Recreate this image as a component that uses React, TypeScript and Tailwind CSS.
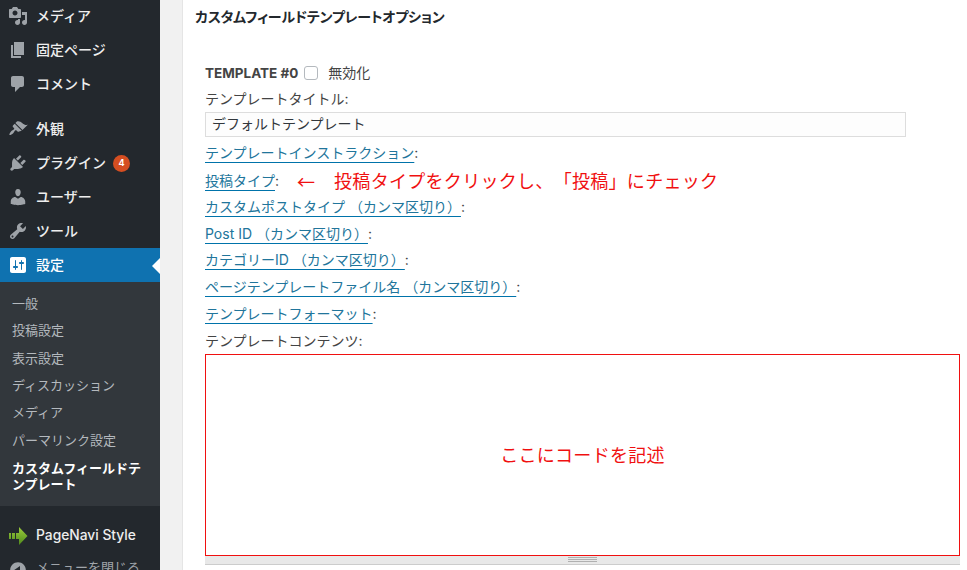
const F = "font-['Inter','Noto_Sans_CJK_JP',sans-serif] [text-spacing-trim:space-all]";

const paths: Record<string, string> = {
  media: "M13 11V4c0-.55-.45-1-1-1h-1.67L9 1H5L3.67 3H2c-.55 0-1 .45-1 1v7c0 .55.45 1 1 1h10c.55 0 1-.45 1-1zM7 4.5c1.38 0 2.5 1.12 2.5 2.5S8.38 9.5 7 9.5 4.5 8.38 4.5 7 5.62 4.5 7 4.5zM14 6h5v10.5c0 1.38-1.12 2.5-2.5 2.5S14 17.88 14 16.5s1.12-2.5 2.5-2.5c.17 0 .34.02.5.05V9h-3V6zm-4 8.05V13h2v3.5c0 1.38-1.12 2.5-2.5 2.5S7 17.88 7 16.5 8.12 14 9.5 14c.17 0 .34.02.5.05z",
  page: "M6 15V2h10v13H6zm-1 1h8v2H3V5h2v11z",
  comment: "M5 2h9c1.1 0 2 .9 2 2v7c0 1.1-.9 2-2 2h-2l-5 5v-5H5c-1.1 0-2-.9-2-2V4c0-1.1.9-2 2-2z",
  brush: "M14.48 11.06L7.41 3.99l1.5-1.5c.5-.56 2.3-.47 3.51.32 1.21.8 1.43 1.28 2.91 2.1 1.18.64 2.45 1.26 4.45.85zM13.77 11.77L6.7 4.7 4.93 6.47c-.39.39-.39 1.02 0 1.41l1.06 1.06c.39.39.39 1.03 0 1.42-.6.6-2.2 1.3-3 2.1-1 1-2 3-1.5 3.5s2.5-.5 3.5-1.5c.8-.8 1.5-2.4 2.1-3 .39-.39 1.03-.39 1.42 0l1.06 1.06c.39.39 1.02.39 1.41 0z",
  plug: "M13.11 4.36L9.87 7.6 8 5.73l3.24-3.24c.35-.34 1.05-.2 1.56.32.52.51.66 1.21.31 1.55zm-8 1.77l.91-1.12 9.01 9.01-1.19.84c-.71.71-2.63 1.16-3.82 1.16H6.14L4.9 17.26c-.59.59-1.54.59-2.12 0-.59-.58-.59-1.53 0-2.12l1.24-1.24v-3.88c0-1.13.4-3.19 1.09-3.89zm7.26 3.97l3.24-3.24c.34-.35 1.04-.21 1.55.31.52.51.66 1.21.31 1.55l-3.24 3.25z",
  user: "M10 9.25c-2.27 0-2.73-3.44-2.73-3.44C7 4.02 7.82 2 9.97 2c2.16 0 2.98 2.02 2.71 3.81 0 0-.41 3.44-2.68 3.44zm0 2.57L12.72 10c2.39 0 4.52 2.33 4.52 4.53v2.49s-3.65 1.13-7.24 1.13c-3.65 0-7.24-1.13-7.24-1.13v-2.49c0-2.25 1.94-4.48 4.47-4.48z",
  tool: "M16.68 9.77c-1.34 1.34-3.3 1.67-4.95.99l-5.41 6.52c-.99.99-2.59.99-3.58 0s-.99-2.59 0-3.57l6.52-5.42c-.68-1.65-.35-3.61.99-4.95 1.28-1.28 3.12-1.62 4.72-1.06l-2.89 2.89 2.82 2.82 2.86-2.87c.53 1.58.18 3.39-1.08 4.65zM3.81 16.21c.4.39 1.04.39 1.43 0 .4-.4.4-1.04 0-1.43-.39-.4-1.03-.4-1.43 0-.39.39-.39 1.03 0 1.43z",
  settings: "M18 16V4c0-1.1-.9-2-2-2H4c-1.1 0-2 .9-2 2v12c0 1.1.9 2 2 2h12c1.1 0 2-.9 2-2zM8 11h1c.55 0 1 .45 1 1s-.45 1-1 1H8v1.5c0 .28-.22.5-.5.5s-.5-.22-.5-.5V13H6c-.55 0-1-.45-1-1s.45-1 1-1h1V5.5c0-.28.22-.5.5-.5s.5.22.5.5V11zm5-2h-1c-.55 0-1-.45-1-1s.45-1 1-1h1V5.5c0-.28.22-.5.5-.5s.5.22.5.5V7h1c.55 0 1 .45 1 1s-.45 1-1 1h-1v5.5c0 .28-.22.5-.5.5s-.5-.22-.5-.5V9z",
  collapse: "M10 2.16c4.33 0 7.84 3.51 7.84 7.84s-3.51 7.84-7.84 7.84S2.16 14.33 2.16 10 5.71 2.16 10 2.16zm2 11.72V6.12L6.18 9.97z",
};

function Icon({ name, active }: { name: string; active?: boolean }) {
  return (
    <svg viewBox="0 0 20 20" className={`w-5 h-5 shrink-0 ml-2 mr-2 ${active ? "text-white" : "text-[#9ea3a8]"}`} fill="currentColor">
      <path d={paths[name]} />
    </svg>
  );
}

function Item({ icon, label, badge, active }: { icon: string; label: string; badge?: string; active?: boolean }) {
  return (
    <div className={`relative flex items-center h-[34px] text-[14px] font-medium ${active ? "bg-[#0f72b0] text-white" : "text-[#eeeeee]"}`}>
      <Icon name={icon} active={active} />
      <span className="pb-[2px]">{label}</span>
      {badge && (
        <span className="ml-[7px] w-[17px] h-[17px] rounded-full bg-[#d54e21] text-white text-[9px] font-bold flex items-center justify-center">{badge}</span>
      )}
      {active && <span className="absolute right-0 top-[10px] w-0 h-0 border-y-[8px] border-y-transparent border-r-[8px] border-r-white" />}
    </div>
  );
}

function Sub({ label }: { label: string }) {
  return <div className="h-[27.33px] flex items-center pl-3 text-[13px] text-[#b4b9be]">{label}</div>;
}

function Row({ children, flush }: { children: React.ReactNode; flush?: boolean }) {
  return <div className={`h-[26.85px] flex items-center text-[14px] text-[#444] ${flush ? "" : "pb-[3px]"}`}>{children}</div>;
}

function LinkRow({ label }: { label: string }) {
  return (
    <Row>
      <a className="text-[#21759b] underline decoration-[#0073aa] underline-offset-[4px]">{label}</a>
      <span>:</span>
    </Row>
  );
}

export default function App() {
  return (
    <div className={`${F} flex w-[967px] h-[570px] overflow-hidden bg-white`}>
      <aside className="w-[160px] shrink-0 bg-[#23282d] -mt-px">
        <Item icon="media" label="メディア" />
        <Item icon="page" label="固定ページ" />
        <Item icon="comment" label="コメント" />
        <div className="h-[11px]" />
        <Item icon="brush" label="外観" />
        <Item icon="plug" label="プラグイン" badge="4" />
        <Item icon="user" label="ユーザー" />
        <Item icon="tool" label="ツール" />
        <Item icon="settings" label="設定" active />
        <div className="bg-[#32373c] pt-[8px] h-[224px]">
          <Sub label="一般" />
          <Sub label="投稿設定" />
          <Sub label="表示設定" />
          <Sub label="ディスカッション" />
          <Sub label="メディア" />
          <Sub label="パーマリンク設定" />
          <div className="pl-3 pr-2 pt-[6px] text-[13px] leading-[16px] font-bold text-white">カスタムフィールドテンプレート</div>
        </div>
        <div className="h-[13px]" />
        <div className="flex items-center h-[34px] text-[13.8px] font-medium text-[#eeeeee]">
          <svg viewBox="0 0 20 20" className="w-5 h-5 shrink-0 ml-2 mr-2">
            <defs>
              <linearGradient id="pn" x1="0" y1="0" x2="0" y2="1">
                <stop offset="0" stopColor="#9ccc3c" />
                <stop offset="1" stopColor="#4f8a1c" />
              </linearGradient>
            </defs>
            <path d="M1 7h2v6H1zM4 7h3v6H4zM8 7h3V1l8.5 9-8.5 9v-6H8z" fill="url(#pn)" />
          </svg>
          <span className="pb-[2px]">PageNavi Style</span>
        </div>
        <div className="flex items-center h-[34px] text-[13px] text-[#a0a5aa]">
          <Icon name="collapse" />
          <span className="pb-[4px]">メニューを閉じる</span>
        </div>
      </aside>

      <div className="w-[23px] shrink-0 bg-[#f1f1f1] border-r border-[#e5e5e5]" />

      <main className="flex-1 min-w-0 bg-white pl-3">
        <h2 className="h-[34px] pb-[2px] flex items-center text-[14px] font-bold tracking-[-0.2px] text-[#23282d] [font-feature-settings:'palt']">カスタムフィールドテンプレートオプション</h2>
        <div className="pl-[10px] pr-[7px] pt-[26px]">
          <Row flush>
            <span className="font-bold text-[13.5px]">TEMPLATE #0</span>
            <span className="ml-[6px] w-[14px] h-[14px] rounded-[3px] border border-[#b4b9be] bg-white" />
            <span className="ml-[10px] pb-[2px] text-[14px]">無効化</span>
          </Row>
          <Row>テンプレートタイトル:</Row>
          <div className="w-[701px] h-[25px] border border-[#ddd] bg-[#fdfdfd] flex items-center pl-[6px] pb-[1px] text-[14px] text-[#32373c] -mt-[2px]">デフォルトテンプレート</div>
          <div className="h-[4px]" />
          <LinkRow label="テンプレートインストラクション" />
          <Row>
            <a className="mt-[2px] text-[#21759b] underline decoration-[#0073aa] underline-offset-[4px]">投稿タイプ</a>
            <span className="mt-[2px]">:</span>
            <span className="ml-[18px] mt-[4px] font-['Noto_Sans_CJK_JP',sans-serif] text-[18px] text-[#f01010]">←</span>
            <span className="ml-[19px] mt-[4px] text-[18px] tracking-[0.3px] text-[#f01010]">投稿タイプをクリックし、「投稿」にチェック</span>
          </Row>
          <LinkRow label="カスタムポストタイプ （カンマ区切り）" />
          <LinkRow label="Post ID （カンマ区切り）" />
          <LinkRow label="カテゴリーID （カンマ区切り）" />
          <LinkRow label="ページテンプレートファイル名 （カンマ区切り）" />
          <LinkRow label="テンプレートフォーマット" />
          <Row>テンプレートコンテンツ:</Row>
          <div className="h-[202px] -mt-[1px] border border-[#f01010] flex items-center justify-center text-[18px] tracking-[0.3px] text-[#f01010]">ここにコードを記述</div>
          <div className="relative h-[9px] bg-[#e8e8e8] border-b border-[#cccccc]">
            <div className="absolute left-[363px] top-[1px] w-[29px] h-[5px] border-y border-[#b0b0b0] flex items-center"><div className="w-full h-px bg-[#b0b0b0]" /></div>
          </div>
        </div>
      </main>
    </div>
  );
}
